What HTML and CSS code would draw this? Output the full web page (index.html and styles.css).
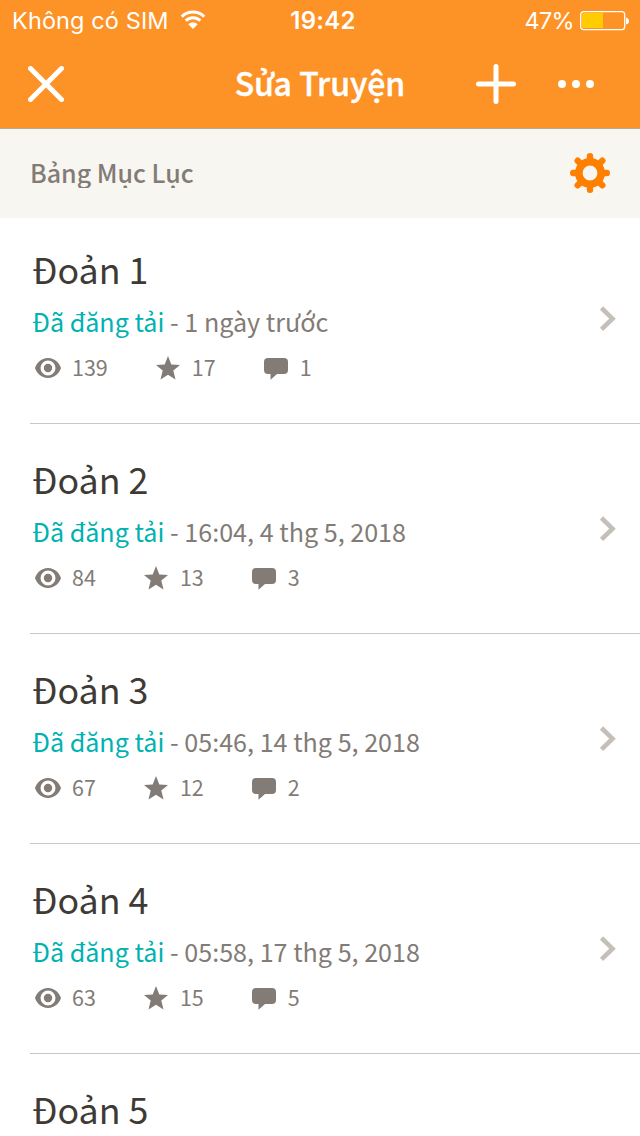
FILE: index.html
```html
<!DOCTYPE html>
<html lang="vi">
  <head>
    <meta charset="UTF-8">
    <title>Sửa Truyện</title>
    <meta name="viewport" content="width=device-width, initial-scale=1.0">
    <link rel="stylesheet" href="styles.css">
  </head>

  <body>
    <!-- icons shared by the rows -->
    <svg class="defs">
      <symbol id="eye" viewBox="0 0 26 20">
        <path fill-rule="evenodd" d="M13 0C20 0 24.500 5.500 26 10C24.500 14.500 20 20 13 20S1.500 14.500 0 10C1.500 5.500 6 0 13 0ZM13 2.500A7.500 7.500 0 1 0 13 17.500A7.500 7.500 0 1 0 13 2.500ZM13 5.800A4.200 4.200 0 1 1 13 14.200A4.200 4.200 0 1 1 13 5.800Z"/>
      </symbol>
      <symbol id="star" viewBox="0 0 24 24">
        <path d="M12 0L15.300 8.400L24 9L17.300 14.600L19.500 23.500L12 18.700L4.500 23.500L6.700 14.600L0 9L8.700 8.400Z"/>
      </symbol>
      <symbol id="comment" viewBox="0 0 24 22">
        <path d="M4 0H20Q24 0 24 4V12Q24 16 20 16H13L6.500 21.700V16H4Q0 16 0 12V4Q0 0 4 0Z"/>
      </symbol>
      <symbol id="chevron" viewBox="0 0 18 26">
        <path d="M2.500 2L13.500 12.700L2.500 23.400" fill="none" stroke="#c5bfba" stroke-width="4.600"/>
      </symbol>
    </svg>

    <div class="top">
      <div class="status">
        <div class="carrier">
          <span>Không có SIM</span>
          <svg class="wifi" width="26" height="20" viewBox="0 0 26 20">
            <path d="M1.800 6.600A16 16 0 0 1 24.200 6.600M5.700 10.700A10.500 10.500 0 0 1 20.300 10.700" fill="none" stroke="#fff" stroke-width="3"/>
            <path d="M13 19L8.300 14.200A6.800 6.800 0 0 1 17.700 14.200Z" fill="#fff"/>
          </svg>
        </div>
        <div class="clock">19:42</div>
        <div class="power">
          <span>47%</span>
          <svg width="50" height="20" viewBox="0 0 50 20">
            <rect x="0.700" y="0.700" width="44" height="18" rx="3" fill="none" stroke="#fff" stroke-width="1.300"/>
            <path d="M3.500 2H23V17H3.500Q2 17 2 15.500V3.500Q2 2 3.500 2Z" fill="#ffcc00"/>
            <path d="M46 6.500Q49 7 49 10T46 13.500Z" fill="#fff"/>
          </svg>
        </div>
      </div>
      <div class="nav">
        <svg width="36" height="36" viewBox="0 0 36 36">
          <path d="M2.500 2.500L33.500 33.500M33.500 2.500L2.500 33.500" stroke="#fff" stroke-width="5" stroke-linecap="round"/>
        </svg>
        <h1>Sửa Truyện</h1>
        <div class="actions">
          <svg width="40" height="40" viewBox="0 0 40 40">
            <path d="M20 2.500V37.500M2.500 20H37.500" stroke="#fff" stroke-width="5" stroke-linecap="round"/>
          </svg>
          <svg width="36" height="8" viewBox="0 0 36 8" fill="#fff">
            <circle cx="4" cy="4" r="4"/>
            <circle cx="18" cy="4" r="4"/>
            <circle cx="32" cy="4" r="4"/>
          </svg>
        </div>
      </div>
    </div>

    <div class="section">
      <h2>Bảng Mục Lục</h2>
      <svg width="40" height="40" viewBox="-20 -20 40 40">
        <g stroke="#ff8000" stroke-width="6.400" stroke-linecap="round">
          <path d="M0 -16.800V-11M0 16.800V11M-16.800 0H-11M16.800 0H11M-12.300 -12.300L-9 -9M12.300 -12.300L9 -9M-12.300 12.300L-9 9M12.300 12.300L9 9"/>
        </g>
        <circle r="11.200" fill="none" stroke="#ff8000" stroke-width="7.600"/>
      </svg>
    </div>

    <div class="chapters">
      <div class="chapter">
        <div class="info">
          <h3>Đoản 1</h3>
          <p><span class="posted">Đã đăng tải</span> - 1 ngày trước</p>
          <div class="stats">
            <span class="stat"><svg class="eye"><use href="#eye"/></svg>139</span>
            <span class="stat"><svg class="star"><use href="#star"/></svg>17</span>
            <span class="stat"><svg class="comment"><use href="#comment"/></svg>1</span>
          </div>
        </div>
        <svg class="chevron"><use href="#chevron"/></svg>
      </div>
      <div class="chapter">
        <div class="info">
          <h3>Đoản 2</h3>
          <p><span class="posted">Đã đăng tải</span> - 16:04, 4 thg 5, 2018</p>
          <div class="stats">
            <span class="stat"><svg class="eye"><use href="#eye"/></svg>84</span>
            <span class="stat"><svg class="star"><use href="#star"/></svg>13</span>
            <span class="stat"><svg class="comment"><use href="#comment"/></svg>3</span>
          </div>
        </div>
        <svg class="chevron"><use href="#chevron"/></svg>
      </div>
      <div class="chapter">
        <div class="info">
          <h3>Đoản 3</h3>
          <p><span class="posted">Đã đăng tải</span> - 05:46, 14 thg 5, 2018</p>
          <div class="stats">
            <span class="stat"><svg class="eye"><use href="#eye"/></svg>67</span>
            <span class="stat"><svg class="star"><use href="#star"/></svg>12</span>
            <span class="stat"><svg class="comment"><use href="#comment"/></svg>2</span>
          </div>
        </div>
        <svg class="chevron"><use href="#chevron"/></svg>
      </div>
      <div class="chapter">
        <div class="info">
          <h3>Đoản 4</h3>
          <p><span class="posted">Đã đăng tải</span> - 05:58, 17 thg 5, 2018</p>
          <div class="stats">
            <span class="stat"><svg class="eye"><use href="#eye"/></svg>63</span>
            <span class="stat"><svg class="star"><use href="#star"/></svg>15</span>
            <span class="stat"><svg class="comment"><use href="#comment"/></svg>5</span>
          </div>
        </div>
        <svg class="chevron"><use href="#chevron"/></svg>
      </div>
      <div class="chapter last">
        <div class="info">
          <h3>Đoản 5</h3>
        </div>
      </div>
    </div>
  </body>
</html>
```

FILE: styles.css
```css
* { box-sizing: border-box; }
body {
  margin: 0;
  height: 1136px;
  overflow: hidden;
  display: flex;
  flex-direction: column;
  background: #fff;
  color: #827b76;
  font-family: 'Noto Sans CJK SC', 'Noto Sans', sans-serif;
}
h1, h2, h3, p { margin: 0; }
svg { display: block; flex: none; }
.defs { display: none; }

.top {
  flex: none;
  height: 129px;
  background: #fd9226;
  border-bottom: 1px solid #b5ab9b;
  color: #fff;
}
.status {
  height: 40px;
  padding: 2px 10px 0 12px;
  display: grid;
  grid-template-columns: 1fr auto 1fr;
  align-items: center;
  font-family: Inter, sans-serif;
  font-size: 23.5px;
  line-height: 38px;
}
.carrier {
  display: flex;
  align-items: center;
  gap: 11px;
  letter-spacing: 0.1px;
}
.wifi { margin-bottom: 2px; }
.clock {
  font-size: 24px;
  font-weight: 600;
  letter-spacing: 0.3px;
  padding-left: 4px;
}
.power {
  display: flex;
  align-items: center;
  justify-content: flex-end;
  gap: 6px;
  letter-spacing: -0.7px;
}
.nav {
  height: 88px;
  padding: 0 28px;
  display: grid;
  grid-template-columns: 1fr auto 1fr;
  align-items: center;
}
h1 {
  font-size: 32px;
  font-weight: 500;
  line-height: 44px;
  margin-bottom: 4px;
  -webkit-text-stroke: 0.4px #fff;
}
.actions {
  display: flex;
  align-items: center;
  justify-content: flex-end;
  gap: 42px;
  margin-right: 18px;
}

.section {
  flex: none;
  height: 89px;
  padding: 0 30px 1px;
  display: flex;
  align-items: center;
  justify-content: space-between;
  background: #f8f6f1;
}
h2 {
  height: 30px;
  overflow: hidden;
  font-size: 25px;
  font-weight: 500;
  line-height: 29px;
}

.chapters {
  height: 922px;
  margin: -4px 0 0 30px;
}
.chapter {
  height: 210px;
  padding: 30px 23px 0 2px;
  display: flex;
  justify-content: space-between;
  border-bottom: 1px solid #c8c7cc;
}
.last {
  height: 82px;
  border-bottom: none;
}
h3 {
  color: #3e3b36;
  font-size: 35.8px;
  font-weight: 400;
  line-height: 48px;
}
.chapter p {
  margin-top: 10px;
  font-size: 25.12px;
  line-height: 38px;
}
.posted { color: #00b2b2; }
.stats {
  margin: 10px 0 0 3px;
  display: flex;
  gap: 48px;
}
.stat {
  display: flex;
  align-items: center;
  font-size: 21.5px;
  line-height: 34px;
  padding-bottom: 2px;
}
.stat svg {
  margin: 2px 12px 0 0;
  fill: #827b76;
}
.stat .eye { width: 26px; height: 20px; margin-right: 11px; }
.star { width: 24px; height: 24px; }
.stat .comment { width: 24px; height: 22px; margin-top: 4px; }
.chevron {
  width: 18px;
  height: 26px;
  margin-top: 62px;
}
```
